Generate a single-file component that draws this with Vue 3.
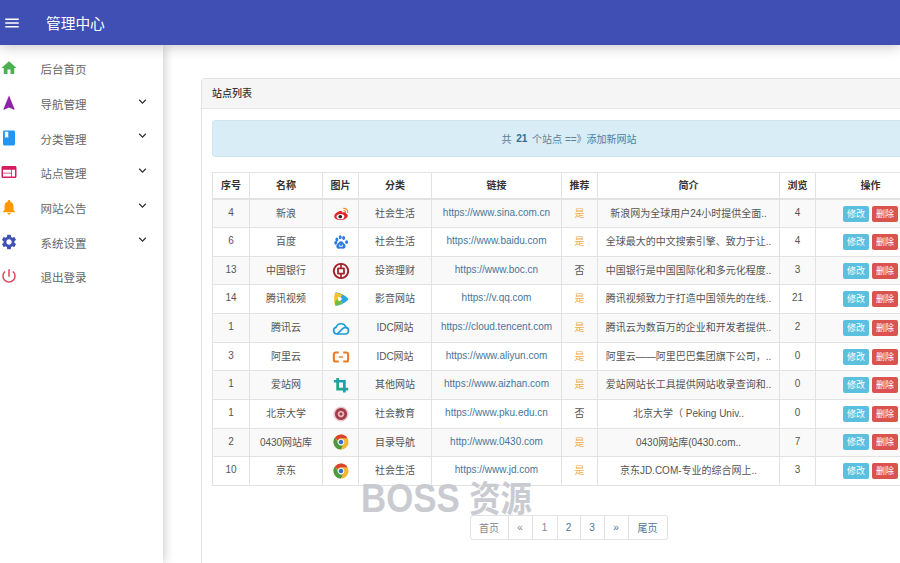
<script setup>
const menu = [
  { t: '后台首页', c: '#4caf50', d: 'M10 20v-6h4v6h5v-8h3L12 3 2 12h3v8z' },
  { t: '导航管理', c: '#8e24aa', arrow: true, d: 'M12 2L4.5 20.29l.71.71L12 18l6.79 3 .71-.71z' },
  { t: '分类管理', c: '#2196f3', arrow: true, d: 'M18 2H6c-1.1 0-2 .9-2 2v16c0 1.1.9 2 2 2h12c1.1 0 2-.9 2-2V4c0-1.1-.9-2-2-2zM6.500 3.500h4.500v8.500l-2.250-1.500-2.250 1.500V3.500z' },
  { t: '站点管理', c: '#d81b60', arrow: true, d: 'M20 4H4c-1.1 0-1.99.9-1.99 2L2 18c0 1.1.9 2 2 2h16c1.1 0 2-.9 2-2V6c0-1.1-.9-2-2-2zm-5 14H4v-4h11v4zm0-5H4V9h11v4zm5 5h-4V9h4v9z' },
  { t: '网站公告', c: '#ff9800', arrow: true, d: 'M12 22c1.1 0 2-.9 2-2h-4c0 1.1.89 2 2 2zm6-6v-5c0-3.07-1.64-5.64-4.5-6.32V4c0-.83-.67-1.5-1.5-1.5s-1.5.67-1.5 1.5v.68C7.63 5.36 6 7.92 6 11v5l-2 2v1h16v-1l-2-2z' },
  { t: '系统设置', c: '#3f51b5', arrow: true, d: 'M19.14 12.94c.04-.3.06-.61.06-.94 0-.32-.02-.64-.07-.94l2.03-1.58c.18-.14.23-.41.12-.61l-1.92-3.32c-.12-.22-.37-.29-.59-.22l-2.39.96c-.5-.38-1.03-.7-1.62-.94l-.36-2.54c-.04-.24-.24-.41-.48-.41h-3.84c-.24 0-.43.17-.47.41l-.36 2.54c-.59.24-1.13.57-1.62.94l-2.39-.96c-.22-.08-.47 0-.59.22L2.74 8.87c-.12.21-.08.47.12.61l2.03 1.58c-.05.3-.09.63-.09.94s.02.64.07.94l-2.03 1.58c-.18.14-.23.41-.12.61l1.92 3.32c.12.22.37.29.59.22l2.39-.96c.5.38 1.03.7 1.62.94l.36 2.54c.05.24.24.41.48.41h3.84c.24 0 .44-.17.47-.41l.36-2.54c.59-.24 1.13-.56 1.62-.94l2.39.96c.22.08.47 0 .59-.22l1.92-3.32c.12-.22.07-.47-.12-.61l-2.01-1.58zM12 15.6c-1.98 0-3.6-1.62-3.6-3.6s1.62-3.6 3.6-3.6 3.6 1.62 3.6 3.6-1.62 3.6-3.6 3.6z' },
  { t: '退出登录', c: '#d9485f', d: 'M13 3h-2v10h2V3zm4.83 2.17l-1.42 1.42C17.99 7.86 19 9.81 19 12c0 3.87-3.13 7-7 7s-7-3.13-7-7c0-2.19 1.01-4.14 2.58-5.42L6.17 5.17C4.23 6.82 3 9.26 3 12c0 4.97 4.03 9 9 9s9-4.03 9-9c0-2.74-1.23-5.18-3.17-6.83z' }
]
const chrome = [
  { d: 'M12 2a10 10 0 1 1-.01 0z', f: '#f2b632' },
  { d: 'M12 2a10 10 0 0 1 8.66 5H12a5 5 0 0 0-4.6 3L4.2 5.8A10 10 0 0 1 12 2z', f: '#d9442f' },
  { d: 'M12 22A10 10 0 0 1 4.2 5.8l3.9 7.400a5 5 0 0 0 6 3.400z', f: '#4a9a3f' },
  { d: 'M12 7.500a4.500 4.500 0 1 1-.01 0z', f: '#f4f4f4' },
  { d: 'M12 9a3 3 0 1 1-.01 0z', f: '#2f6fd0' }
]
const logos = {
  weibo: [
    { d: 'M3 15c0-3.5 5-7 9-7 1.5 0 2 1 1.6 2.2 2.6-1 5.4-.6 5.4 1.5.8.3 2 1 2 2.6 0 3-4.500 5.700-9.500 5.700S3 18.500 3 15z', f: '#e0242c' },
    { d: 'M6 15.500c0-2 2.500-3.500 5.500-3.500s5 1.500 5 3.500-2.300 3.500-5.200 3.500S6 17.500 6 15.500z', f: '#fff' },
    { d: 'M8.500 15.500a2.500 2.200 0 1 1 5 0 2.500 2.200 0 1 1-5 0z', f: '#222' },
    { d: 'M15 4.500c3.500-.5 6.500 2 6 6M15.500 7.500c1.700-.2 3 1 2.800 2.800', s: '#f08a24', w: 1.6 }
  ],
  baidu: [
    { d: 'M6.500 6a2 2.600 0 1 1-.01 0zM5 10.500a2 2.500 0 1 1-.01 0zM11 3a2 2.700 0 1 1-.01 0zM15.500 4a2 2.700 0 1 1-.01 0zM19.500 9.500a2 2.500 0 1 1-.01 0z', f: '#2f7de1' },
    { d: 'M12 11c2.500 0 3 2.500 5 4 2 1.700 1.300 6-2.300 6-1.300 0-1.800-.5-2.900-.5s-1.600.5-2.900.5C5.500 21 5 17 7 15c1.800-1.500 2.500-4 5-4z', f: '#2f7de1' },
    { d: 'M10.200 15.500v2.300h3.600v-2.300', s: '#fff', w: 1.100 }
  ],
  boc: [
    { d: 'M12 2.500a9.500 9.500 0 1 1-.01 0z', s: '#a5222a', w: 2.600 },
    { d: 'M8.500 8.500h7a.5.5 0 0 1 .5.5v6a.5.5 0 0 1-.5.5h-7a.5.5 0 0 1-.5-.5V9a.5.5 0 0 1 .5-.5z', s: '#a5222a', w: 2.400 },
    { d: 'M12 2v6M12 16v6', s: '#a5222a', w: 2.200 }
  ],
  qqv: [
    { d: 'M5 3c-1.500 5.500-1.500 12.500 0 18 6-.8 12-3.700 16-7.500.9-.8.9-2.200 0-3C17 6.700 11 3.800 5 3z', f: '#2aa7e0' },
    { d: 'M4 3.200C2.500 8.700 2.500 15.300 4 20.800c3.500-.5 7-1.500 10-3L10 12l4-5.800C11 4.700 7.500 3.700 4 3.200z', f: '#f3c02e' },
    { d: 'M4 15c0 2 .3 4 .6 5.700 3.400-.4 6.400-1.400 9-3L9 12z', f: '#6dbd45' },
    { d: 'M8.500 9c-.4 2-.4 4 0 6 2-.5 3.800-1.500 5.200-3-1.400-1.500-3.200-2.500-5.200-3z', f: '#fff' }
  ],
  cloud: [
    { d: 'M6.500 20h11a4.500 4.500 0 0 0 1-8.900A6.800 6.800 0 0 0 5.600 10.800 4.700 4.700 0 0 0 6.500 20z', s: '#1c9bd8', w: 2.200 },
    { d: 'M6.500 20c3-1.500 6.500-6.500 9-8 1.500-.9 3.500-1.200 5-.2', s: '#1c9bd8', w: 2.200 }
  ],
  ali: [
    { d: 'M9 6H5a2.500 2.500 0 0 0-2.500 2.500v7A2.500 2.500 0 0 0 5 18h4M15 6h4a2.500 2.500 0 0 1 2.500 2.500v7A2.500 2.500 0 0 1 19 18h-4', s: '#ee7a23', w: 2.800 },
    { d: 'M9 12h6', s: '#ee7a23', w: 1.800 }
  ],
  aizhan: [
    { d: 'M7.500 2.500v15h14', s: '#19a98a', w: 3.600 },
    { d: 'M2.500 7h14v15', s: '#17a3b0', w: 3.600 }
  ],
  pku: [
    { d: 'M12 2a10 10 0 1 1-.01 0z', f: '#e9c7cc' },
    { d: 'M12 4a8 8 0 1 1-.01 0z', f: '#a23a48' },
    { d: 'M12 7.500a4.500 4.500 0 1 1-.01 0z', f: '#e3b5bb' },
    { d: 'M12 10a2 2 0 1 1-.01 0z', f: '#a23a48' }
  ],
  chrome
}
const rows = [
  { id: 4, name: '新浪', logo: 'weibo', cat: '社会生活', url: 'https://www.sina.com.cn', rec: '是', desc: '新浪网为全球用户24小时提供全面..', view: 4 },
  { id: 6, name: '百度', logo: 'baidu', cat: '社会生活', url: 'https://www.baidu.com', rec: '是', desc: '全球最大的中文搜索引擎、致力于让..', view: 4 },
  { id: 13, name: '中国银行', logo: 'boc', cat: '投资理财', url: 'https://www.boc.cn', rec: '否', desc: '中国银行是中国国际化和多元化程度..', view: 3 },
  { id: 14, name: '腾讯视频', logo: 'qqv', cat: '影音网站', url: 'https://v.qq.com', rec: '是', desc: '腾讯视频致力于打造中国领先的在线..', view: 21 },
  { id: 1, name: '腾讯云', logo: 'cloud', cat: 'IDC网站', url: 'https://cloud.tencent.com', rec: '是', desc: '腾讯云为数百万的企业和开发者提供..', view: 2 },
  { id: 3, name: '阿里云', logo: 'ali', cat: 'IDC网站', url: 'https://www.aliyun.com', rec: '是', desc: '阿里云——阿里巴巴集团旗下公司，..', view: 0 },
  { id: 1, name: '爱站网', logo: 'aizhan', cat: '其他网站', url: 'https://www.aizhan.com', rec: '是', desc: '爱站网站长工具提供网站收录查询和..', view: 0 },
  { id: 1, name: '北京大学', logo: 'pku', cat: '社会教育', url: 'https://www.pku.edu.cn', rec: '否', desc: '北京大学（ Peking Univ..', view: 0 },
  { id: 2, name: '0430网站库', logo: 'chrome', cat: '目录导航', url: 'http://www.0430.com', rec: '是', desc: '0430网站库(0430.com..', view: 7 },
  { id: 10, name: '京东', logo: 'chrome', cat: '社会生活', url: 'https://www.jd.com', rec: '是', desc: '京东JD.COM-专业的综合网上..', view: 3 }
]
const heads = ['序号', '名称', '图片', '分类', '链接', '推荐', '简介', '浏览', '操作']
const widths = [37, 73, 36, 73, 130, 36, 182, 36, 110]
const pages = [
  { t: '首页', w: 39, c: 'grey' },
  { t: '«', w: 25, c: 'grey' },
  { t: '1', w: 26, c: 'grey' },
  { t: '2', w: 24 },
  { t: '3', w: 25 },
  { t: '»', w: 25 },
  { t: '尾页', w: 40 }
]
</script>

<template>
  <div class="app">
    <header class="topbar">
      <svg class="burger" viewBox="0 0 24 24"><path d="M3 18h18v-2H3v2zm0-5h18v-2H3v2zm0-7v2h18V6H3z" /></svg>
      <span class="brand">管理中心</span>
    </header>
    <div class="body">
      <aside class="sidebar">
        <div v-for="m in menu" :key="m.t" class="item">
          <svg class="icon" viewBox="0 0 24 24"><path :d="m.d" :fill="m.c" fill-rule="evenodd" /></svg>
          <span class="label">{{ m.t }}</span>
          <svg v-if="m.arrow" class="chev" viewBox="0 0 24 24"><path d="M16.59 8.59L12 13.17 7.41 8.59 6 10l6 6 6-6z" /></svg>
        </div>
      </aside>
      <main class="main">
        <section class="panel">
          <div class="panel-head">站点列表</div>
          <div class="panel-body">
            <div class="alert">共 <b>21</b> 个站点 ==》<a class="alert-link">添加新网站</a></div>
            <table class="grid">
              <colgroup><col v-for="(w, i) in widths" :key="i" :style="{ width: w + 'px' }" /></colgroup>
              <thead>
                <tr><th v-for="h in heads" :key="h">{{ h }}</th></tr>
              </thead>
              <tbody>
                <tr v-for="r in rows" :key="r.url">
                  <td>{{ r.id }}</td>
                  <td>{{ r.name }}</td>
                  <td class="flush">
                    <svg class="logo" viewBox="0 0 24 24">
                      <path v-for="(p, i) in logos[r.logo]" :key="i" :d="p.d" :fill="p.f || 'none'" :stroke="p.s || 'none'" :stroke-width="p.w || 0" />
                    </svg>
                  </td>
                  <td>{{ r.cat }}</td>
                  <td><a class="link">{{ r.url }}</a></td>
                  <td :class="{ yes: r.rec === '是' }">{{ r.rec }}</td>
                  <td>{{ r.desc }}</td>
                  <td>{{ r.view }}</td>
                  <td class="flush"><div class="ops"><span class="btn info">修改</span><span class="btn danger">删除</span></div></td>
                </tr>
              </tbody>
            </table>
            <nav class="pager">
              <span v-for="p in pages" :key="p.t" class="page" :class="p.c" :style="{ width: p.w + 'px' }">{{ p.t }}</span>
            </nav>
          </div>
        </section>
      </main>
    </div>
    <div class="mark">BOSS <span class="mark-cjk">资源</span></div>
  </div>
</template>

<style>
html, body { margin: 0; background: #fff; overflow: hidden; }
</style>

<style scoped>
.app {
  position: relative;
  width: 900px;
  height: 563px;
  overflow: hidden;
  display: flex;
  flex-direction: column;
  background: #fff;
  font-family: "Liberation Sans", "Noto Sans CJK SC", sans-serif;
  color: #555;
}
.topbar {
  position: relative;
  z-index: 3;
  flex: 0 0 45px;
  display: flex;
  align-items: center;
  background: #3f4fb3;
  box-shadow: 0 2px 12px rgba(0, 0, 0, .22);
  color: #fff;
}
.burger { width: 18px; height: 18px; margin-left: 3px; fill: #fff; }
.brand { margin-left: 25px; font-size: 14.7px; }
.body { flex: 1; display: flex; min-height: 0; }
.sidebar {
  position: relative;
  z-index: 2;
  flex: 0 0 163px;
  box-sizing: border-box;
  padding-top: 6px;
  background: #fff;
  box-shadow: 1px 0 10px rgba(0, 0, 0, .22);
}
.item { height: 34.7px; display: flex; align-items: center; padding: 0 13px 0 0; }
.icon { width: 18px; height: 18px; flex: none; }
.label { margin-left: 22.500px; padding-top: 2px; flex: 1; font-size: 11.500px; color: #666; }
.chev { width: 15px; height: 15px; margin-bottom: 4px; fill: #333; }
.main { flex: 1; min-width: 0; padding: 33px 0 0 38px; }
.panel {
  width: 736px;
  height: 600px;
  box-sizing: border-box;
  border: 1px solid #e3e3e3;
  border-radius: 3px;
}
.panel-head {
  height: 30px;
  box-sizing: border-box;
  display: flex;
  align-items: center;
  padding: 0 10px 2px;
  background: #f5f5f5;
  border-bottom: 1px solid #e6e6e6;
  font-size: 10px;
  font-weight: 500;
  color: #333;
}
.panel-body { padding: 11px 10px; }
.alert {
  height: 37px;
  box-sizing: border-box;
  display: flex;
  align-items: center;
  justify-content: center;
  background: #d9edf7;
  border: 1px solid #cfe6f2;
  border-radius: 3px;
  font-size: 10px;
  color: #5c8197;
  white-space: pre;
}
.alert b { margin: 0 2px; color: #31708f; }
.alert-link { color: #4a7ea6; }
.grid {
  margin-top: 15px;
  width: 713px;
  table-layout: fixed;
  border-collapse: collapse;
  font-size: 10px;
}
.grid th, .grid td {
  box-sizing: border-box;
  border: 1px solid #e2e2e2;
  padding: 0 0 2.500px;
  text-align: center;
  white-space: nowrap;
  overflow: hidden;
}
.grid th { height: 26.500px; font-weight: 700; color: #333; border-bottom-width: 2px; }
.grid td { height: 28.650px; color: #555; }
.grid td.flush { padding: 0; }
.grid tbody tr:nth-child(odd) td { background: #f9f9f9; }
.grid td.yes { color: #f0ad4e; }
.link { color: #47769b; }
.flush { line-height: 0; }
.logo { width: 18px; height: 18px; vertical-align: middle; }
.ops { display: flex; justify-content: center; gap: 3px; }
.btn {
  width: 26px;
  height: 16px;
  border-radius: 2px;
  display: flex;
  align-items: center;
  justify-content: center;
  color: #fff;
  font-size: 9px;
  line-height: 16px;
}
.info { background: #5bc0de; }
.danger { background: #d9534f; }
.pager {
  display: flex;
  justify-content: center;
  margin-top: 29px;
}
.page {
  height: 25px;
  box-sizing: border-box;
  display: flex;
  align-items: center;
  justify-content: center;
  border: 1px solid #e3e3e3;
  margin-left: -1px;
  background: #fff;
  font-size: 10px;
  color: #47769b;
}
.page.grey { color: #888; }
.page:first-child { border-radius: 3px 0 0 3px; }
.page:last-child { border-radius: 0 3px 3px 0; }
.mark {
  position: absolute;
  left: 361px;
  top: 475px;
  z-index: 4;
  font-size: 40px;
  line-height: 46px;
  font-weight: 700;
  color: #c9cbd1;
  white-space: pre;
  transform: scaleX(.87);
  transform-origin: left center;
}
.mark-cjk { font-size: 36px; }
</style>
